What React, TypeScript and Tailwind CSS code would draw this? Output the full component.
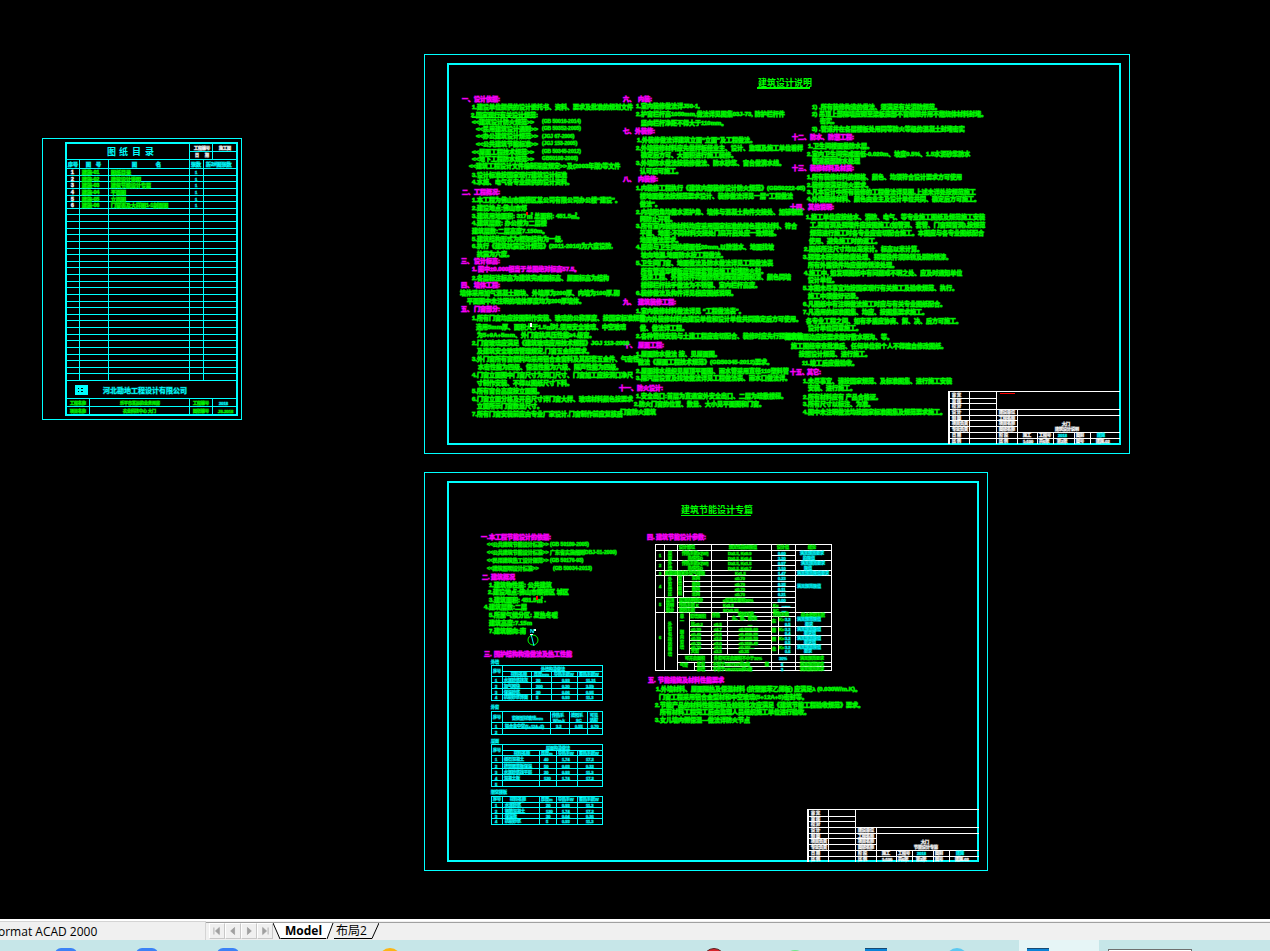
import { useState } from "react";

type Note = [x: number, y: number, text: string];
type Heading = [x: number, y: number, no: string, titleX: number, title: string];
type Seg = [x1: number, y1: number, x2: number, y2: number];

const CYAN = "#00ffff";
const GREEN = "#00ff00";
const MAGENTA = "#ff00ff";
const WHITE = "#ffffff";

// y is the top of the text row in every list below
const designHeadings: Heading[] = [
  [462, 95, "一、", 474, "设计依据:"],
  [462, 188, "二、", 474, "工程概况:"],
  [461, 257, "三、", 474, "设计标高:"],
  [461, 281, "四、", 474, "墙体工程:"],
  [461, 305, "五、", 474, "门窗部分:"],
  [623, 95, "六、", 638, "内装:"],
  [623, 127, "七、", 635, "外装修:"],
  [623, 175, "八、", 638, "内装修:"],
  [623, 298, "九、", 638, "建筑装修工程:"],
  [624, 341, "十、", 638, "屋面工程:"],
  [619, 384, "十一、", 637, "防火设计:"],
  [792, 133, "十二、", 810, "防水、防潮工程:"],
  [792, 164, "十三、", 810, "装修材料及材质:"],
  [790, 203, "十四、", 808, "其他说明:"],
  [790, 368, "十五、", 807, "其它:"],
  [472, 265, "1.", 478, "图中±0.000相当于总图绝对标高57.5。"],
];

const designNotes: Note[] = [
  [472, 103, "1.建设单位提供的设计委托书、资料、要求及批准的规划文件"],
  [471, 111, "2.国家现行有关设计规范:"],
  [472, 118, "<<建筑设计防火规范>>"],
  [476, 125, "<<民用建筑设计通则>>"],
  [476, 132, "<<办公建筑设计规范>>"],
  [476, 140, "<<公共建筑节能标准>>"],
  [472, 148, "<<屋面工程技术规范>>"],
  [472, 155, "<<地下工程防水规范>>"],
  [469, 162, "<<建筑工程设计文件编制深度规定>>及(2003年版)等文件"],
  [472, 171, "3.设计标准按国家现行建筑设计标准"],
  [472, 178, "4.水施、电气各专业提供的设计资料。"],
  [472, 196, "1.本工程为佛山市顺德区某公司有限公司办公楼“建设”。"],
  [472, 204, "2.建设地点:佛山市郊"],
  [472, 212, "3.建筑用地面积: 317㎡ 总面积: 451.5㎡。"],
  [472, 219, "4.建筑层数: 办公楼为二层楼"],
  [472, 227, "建筑层数:二层高度7.150m。"],
  [472, 235, "5.建筑结构形式为框架结构为一级,"],
  [472, 242, "6.执行《建筑抗震设计规范》(2011-2010)为六度设防,"],
  [477, 250, "抗震为六度。"],
  [472, 274, "2.各层标注标高为建筑完成面标高、屋面标高为结构"],
  [460, 289, "墙体采用加气混凝土砌块、外墙厚为200厚、内墙为100厚,砌"],
  [467, 297, "平面图中未注明的墙体厚度均为200厚墙体。"],
  [472, 314, "1.所有门窗均应按图制作安装、玻璃的公称厚度、按国家标准规范"],
  [476, 323, "选用5mm厚、面积大于1.5㎡时,须用安全玻璃、中空玻璃"],
  [477, 331, "为5+9A+5mm、外门窗抗风压性能≥4.级窗。"],
  [472, 339, "2.门窗玻璃应满足《建筑玻璃应用技术规程》JGJ 113-2009"],
  [477, 347, "及建筑安全玻璃管理规定,门窗五金按要求。"],
  [472, 355, "3.外门窗所有窗框料均采用铝合金窗料及其配套五金件、气密性"],
  [478, 363, "水密性能为四级、保温性能为六级、隔声性能为四级。"],
  [472, 371, "4.门窗立面图中门窗尺寸为洞口尺寸、门窗加工应按洞口净尺"],
  [477, 379, "寸制作安装、不得以图纸尺寸下料。"],
  [472, 387, "5.所有窗台高度按立面图。"],
  [472, 395, "6.门窗立面分格及开启尺寸详门窗大样、玻璃材料颜色按要求"],
  [477, 402, "立面所示门窗数量尺寸。"],
  [472, 410, "7.所有门窗安装前应由专业厂家设计,门窗制作前应复核后"],
  [636, 102, "1.室内装修做法详J50-1,"],
  [636, 110, "2.护窗栏杆高1050mm,做法详见图集03J-73, 防护栏杆件"],
  [641, 119, "竖向栏杆净距不得大于110mm。"],
  [637, 136, "1.外装修做法详建筑立面“立面”及工程做法。"],
  [636, 144, "2.外墙装修材料应先做样板经业主、设计、监理及施工单位看样"],
  [641, 151, "确定后方可、大面积进行施工装修。"],
  [636, 159, "3.外墙防水做法按装修做法、防水砂浆、窗台做滴水线。"],
  [640, 167, "认可后可施工。"],
  [636, 184, "1.内装修工程执行《建筑内部装修设计防火规范》(GB50222-95)"],
  [640, 192, "楼地面做法按规范要求设计、装修做法详见一层“工程做法"],
  [640, 200, "做法”。"],
  [636, 208, "2.内墙阳角均做水泥护角、墙体与混凝土构件交接处、加铺钢丝"],
  [640, 215, "网防止开裂。"],
  [636, 222, "3.所有室内装修材料均应采用国家标准的绿色建筑材料、符合"],
  [640, 229, "平面、地面:不同材料交接处门扇开启处应一致规格。"],
  [640, 236, "地面做法要求。"],
  [636, 243, "4.厨房与卫生间的楼面低20mm,以防溢水、地面找坡"],
  [641, 251, "坡向地漏,地面防水按工程做法。"],
  [636, 259, "5.卫生间门窗、地面做法及防水做法详见工程做法表"],
  [641, 267, "所有管道穿楼板应预埋套管后施工封堵防火封。"],
  [641, 273, "油漆工程、外露铁件均做防锈漆两道刷调和漆、颜色同墙"],
  [641, 281, "楼梯栏杆扶手做法为不锈钢、室内栏杆高度。"],
  [636, 289, "6.装修做法及构件详见相应图纸说明。"],
  [636, 307, "1.室内装修材料做法详见 “工程做法表”。"],
  [640, 315, "室内外装修材料由建设单位和设计单位共同确定后方可使用。"],
  [640, 324, "做、做法详工程。"],
  [636, 332, "2.各种管线安装与土建工程应密切配合、装修时应先行预埋安装"],
  [636, 350, "1.屋面防水做法 按、见屋面图。"],
  [638, 358, "做法《屋面工程技术规范》(GB50345-2012)要求。"],
  [636, 367, "2.屋面排水组织见屋顶平面图、雨水管采用直径110塑料管"],
  [636, 374, "3.隔汽层设置及找坡做法详见工程做法表、雨水口做法详。"],
  [636, 392, "1.安全出口:首层为直通室外安全出口、二层为疏散楼梯。"],
  [634, 400, "2.防火门窗的位置、数量、大小见平面图和门窗。"],
  [620, 408, "门窗防火建筑"],
  [812, 103, "1) .所有装修构造的做法、须满足有关消防规范。"],
  [812, 110, "2) 吊顶上部隔墙应砌至梁板底部不留缝隙并用不燃烧体材料封堵。"],
  [820, 117, "密实。"],
  [812, 125, "3) .管道井在各层楼板处用同等防火等级的混凝土封堵密实"],
  [808, 142, "1.卫生间楼面做防水层。"],
  [807, 150, "2.室内卫生间完成面低-0.020m、坡度0.5%、1.5水泥砂浆防水"],
  [812, 157, "管道根部防水处理"],
  [807, 173, "1.所有装修材料的规格、颜色、均须符合设计要求方可使用"],
  [807, 181, "2.装修须满足防火要求。"],
  [807, 188, "3.凡本设计中所有装修的工程做法详见图,上述未详处按规范施工"],
  [807, 195, "4.外墙装修材料、颜色由业主及设计单位共同、确定后方可施工。"],
  [806, 213, "1.施工单位应按给水、消防、电气、等专业施工图纸及规范施工安装"],
  [810, 221, "工,预留洞及预埋件应按图施工(如管洞、套管、门窗预留洞),按规范"],
  [810, 229, "规范进行施工时各专业应密切配合施工。本图应与各专业图纸配合"],
  [809, 237, "使用、避免施工时的返工。"],
  [804, 245, "2.图纸所注尺寸均以毫米计。标高以米计算。"],
  [803, 253, "3.预埋木砖须做防腐处理、预埋铁件须除锈及刷防锈漆。"],
  [808, 261, "所有外露铁件均应做防锈漆处理。"],
  [804, 269, "4.施工中, 如发现图纸中有问题或不明之处、应及时通知单位"],
  [808, 276, "设计单位。"],
  [803, 284, "5.本图未尽事宜均按国家现行有关施工及验收规范、执行。"],
  [808, 292, "施工中须做好记录。"],
  [803, 300, "6.凡图纸中有注明做法施工时应与有关专业图纸配合。"],
  [803, 308, "7.凡选用的标准图集、均应、按图集要求施工。"],
  [806, 317, "各专业工程之间、如有矛盾应协商、解、决、后方可施工。"],
  [808, 324, "设计单位同意施工。"],
  [785, 333, "建筑物周边应按要求做好散水明沟、等。"],
  [791, 342, "施工图经审查批准后、任何单位和个人不得擅自修改图纸。"],
  [799, 350, "按照设计规范、进行施工。"],
  [802, 359, "11.竣工后应做验收。"],
  [803, 377, "1.未尽事宜、请按国家规范、及标准图集、进行施工安装"],
  [808, 384, "安装、进行施工。"],
  [803, 393, "2.所有材料应有 产品合格证。"],
  [803, 400, "3.所有尺寸以标注、为准。"],
  [803, 408, "4.图中未注明做法均按国家标准图集及规范要求施工。"],
];

const designCodes: Note[] = [
  [542, 118, "(GB 50016-2014)"],
  [542, 125, "(GB 50352-2005)"],
  [542, 133, "(JGJ 67-2006)"],
  [542, 140, "(JGJ 153-2005)"],
  [542, 148, "(GB 50345-2012)"],
  [542, 155, "GB50108-2008)"],
];

const energyHeadings: Heading[] = [
  [481, 533, "一.", 489, "本工程节能设计的依据:"],
  [482, 573, "二.", 491, "建筑概况"],
  [484, 650, "三.", 494, "围护结构构造做法及热工性能"],
  [647, 533, "四.", 656, "建筑节能设计参数:"],
  [648, 676, "五.", 658, "节能措施及材料性能要求"],
];

const energyNotes: Note[] = [
  [489, 581, "1.建筑物性质: 公共建筑"],
  [488, 588, "2.建设地点:佛山市顺德区 城区"],
  [489, 596, "3.建筑面积: 451.5㎡ ."],
  [484, 603, "4.建筑层数:二层"],
  [489, 611, "5.所属气候分区: 夏热冬暖"],
  [489, 619, "建筑高度:7.15m"],
  [489, 627, "7.建筑朝向:南"],
  [656, 685, "1.外墙材料、屋面隔热及保温材料 (挤塑聚苯乙烯板) 应满足λ (0.030W/m.K)。"],
  [659, 693, "门窗工程采用铝合金型材和中空玻璃(5+12A+5)密封等。"],
  [655, 701, "2.节能产品的材料性能指标及检验批次应满足《建筑节能工程验收规范》要求。"],
  [660, 708, "所有材料工程完工后由监理人员组织施工单位进行验收。"],
  [655, 716, "3.女儿墙内侧保温—做法详防火节点"],
];

const energyCodes: Note[] = [
  [487, 541, "<<公共建筑节能设计标准>> (GB 50189-2005)"],
  [487, 549, "<<公共建筑节能设计标准>> 广东省实施细则DBJ-51-2009)"],
  [487, 557, "<<民用建筑热工设计规范>> (GB 50176-93)"],
  [487, 565, "<<建筑照明设计标准>>"],
  [553, 565, "(GB 50034-2013)"],
];

const catalogRows = [
  ["建施-01", "图纸目录"],
  ["建施-02", "建筑设计说明"],
  ["建施-03", "建筑节能设计专篇"],
  ["建施-04", "平面图"],
  ["建施-05", "立面图"],
  ["建施-06", "门窗表及大样图1-1剖面图"],
];

// 32 rows share the 212px between the header and the company name
const catalogRowY = (i: number) => Math.round(168 + i * 6.625);

const catalogLines: Seg[] = [
  [66, 159, 237, 159],
  [189, 151, 237, 151],
  [66, 398, 237, 398],
  [66, 406, 237, 406],
  [79, 159, 79, 380],
  [108, 159, 108, 380],
  [189, 143, 189, 380],
  [203, 159, 203, 380],
  [212, 143, 212, 159],
  [89, 398, 89, 415],
  [189, 398, 189, 415],
  [212, 398, 212, 415],
];

const titleBlockLines: Seg[] = [
  [0, 0, 172, 0],
  [0, 0, 0, 53],
  [1, 0, 1, 53],
  [21, 0, 21, 53],
  [48, 0, 48, 53],
  [69, 18, 69, 53],
  [89, 41, 89, 53],
  [105, 41, 105, 53],
  [126, 41, 126, 53],
  [142, 41, 142, 53],
  [0, 7, 48, 7],
  [0, 12, 48, 12],
  [0, 18, 172, 18],
  [0, 24, 172, 24],
  [0, 29, 69, 29],
  [0, 35, 69, 35],
  [0, 41, 172, 41],
  [0, 47, 172, 47],
];

const summaryLines: Seg[] = [
  [664, 544, 664, 670], [677, 544, 677, 670], [711, 544, 711, 670],
  [771, 544, 771, 670], [795, 544, 795, 670], [683, 575, 683, 597],
  [689, 612, 689, 654], [727, 612, 727, 654], [694, 662, 694, 670],
  [778, 616, 778, 654], [655, 550, 831, 550], [655, 560, 831, 560],
  [771, 555, 795, 555], [771, 565, 795, 565], [655, 570, 831, 570],
  [655, 575, 831, 575], [683, 581, 795, 581], [683, 586, 795, 586],
  [683, 591, 795, 591], [655, 597, 795, 597], [677, 602, 795, 602],
  [677, 607, 795, 607], [655, 612, 831, 612], [727, 616, 795, 616],
  [689, 620, 771, 620], [689, 626, 831, 626], [689, 631, 771, 631],
  [689, 635, 831, 635], [689, 640, 771, 640], [689, 644, 831, 644],
  [689, 648, 771, 648], [677, 654, 831, 654], [677, 662, 831, 662],
  [694, 666, 831, 666],
];

const summaryGreen: Note[] = [
  [679, 545, "设计部位"], [729, 545, "规定性指标限值"], [777, 545, "设计值"], [808, 545, "结论"],
  [659, 553, "1"], [659, 563, "2"], [659, 571, "3"], [659, 584, "4"], [659, 602, "5"], [659, 635, "6"],
  [668, 551, "屋"], [668, 556, "面"], [668, 561, "外"], [668, 566, "墙"],
  [682, 551, "传热系数K[W/]"], [688, 556, "热惰性D"],
  [682, 561, "传热系数K[W/]"], [688, 566, "热惰性D"],
  [728, 551, "D≥2.5, K≤0.9"], [728, 556, "D≥2.5, K≤0.4"],
  [728, 561, "D≥2.5, K≤1.5"], [728, 566, "D≥2.5, K≤0.7"],
  [665, 571, "底面接触室外空气楼板"], [735, 571, "K≤1.5"],
  [668, 577, "外"], [668, 582, "窗"], [668, 587, "墙"], [668, 592, "比"],
  [678, 576, "窗"], [678, 581, "墙"], [678, 586, "面"], [678, 591, "积"],
  [692, 576, "东向"], [692, 582, "南向"], [692, 587, "西向"], [692, 592, "北向"],
  [735, 576, "≤0.70"], [735, 582, "≤0.70"], [735, 587, "≤0.70"], [735, 592, "≤0.70"],
  [666, 598, "屋顶"], [666, 603, "透明"], [666, 608, "部分"],
  [679, 598, "屋顶透明部分"], [723, 598, "≤屋顶总面积20%"],
  [679, 603, "传热系数 K"], [723, 603, "K≤3.5"], [679, 608, "遮阳系数"], [723, 608, "SC≤0.35"],
  [773, 603, "K="], [773, 608, "SC"],
  [668, 622, "外"], [668, 627, "窗"], [668, 632, "包"], [668, 637, "括"], [668, 642, "透"], [668, 647, "明"], [668, 652, "墙"],
  [680, 614, "单"], [680, 619, "一"], [680, 630, "朝"], [680, 635, "向"], [680, 640, "窗"], [680, 645, "墙"],
  [690, 614, "窗墙面积"], [712, 613, "传热"], [738, 612, "遮阳系数"],
  [732, 616, "东、南、西/北"], [773, 612, "传热系数"], [801, 613, "综合遮阳系数"],
  [691, 622, "比≤0.2"], [691, 627, "≤0.30"], [691, 632, "≤0.40"], [691, 636, "≤0.50"], [691, 641, "≤0.70"], [691, 645, "≤0.70"], [691, 649, "天窗"],
  [714, 622, "≤6.5"], [714, 627, "≤4.7"], [714, 632, "≤3.5"], [714, 636, "≤3.0"], [714, 641, "≤3.0"], [714, 645, "≤2.5"], [714, 649, "≤3.5"],
  [748, 622, "—"], [739, 627, "≤0.50/0.60"], [739, 632, "≤0.45/0.55"], [739, 636, "≤0.40/0.50"], [739, 641, "≤0.35/0.45"], [739, 645, "≤0.35/—"], [739, 649, "≤0.35"],
  [772, 619, "东"], [772, 628, "南"], [772, 637, "西"], [772, 647, "北"],
  [779, 617, "K="], [779, 627, "K="], [779, 636, "K="], [779, 645, "K="],
  [685, 656, "可开启面积"], [714, 656, "外窗可开启面积不小于30%"], [800, 656, "满足规范要求"],
  [680, 663, "气密"], [697, 662, "外窗"], [697, 667, "幕墙"],
  [713, 662, "不低于GB7107的6级"], [713, 667, "不低于GB15225的3级"], [765, 662, "级"],
  [800, 662, "满足规范要求"], [800, 667, "满足规范要求"],
];

const summaryCyan: Note[] = [
  [778, 551, "0.60"], [778, 556, "3.20"], [778, 561, "0.97"], [778, 566, "3.10"], [778, 571, "1.47"],
  [778, 576, "0.23"], [778, 582, "0.35"], [778, 587, "0.11"], [778, 592, "0.21"], [778, 598, "0.00"],
  [800, 551, "满足规范要求"], [803, 556, "的限值"], [801, 561, "满足规范要求"], [804, 566, "限值"],
  [797, 571, "满足规范限值要求"], [797, 584, "满足规范限值"],
  [782, 603, "——"], [782, 608, "—"],
  [785, 617, "3.2"], [785, 627, "3.2"], [785, 636, "3.2"], [785, 645, "3.2"],
  [785, 622, "0.5"], [785, 631, "0.4"], [785, 640, "0.5"], [785, 649, "0.6"],
  [797, 617, "满足规范限值"], [805, 622, "要求"], [797, 627, "满足规范限值"], [804, 631, "要求值"],
  [797, 636, "满足规范限值"], [804, 640, "要求值"], [797, 645, "满足规范限值"], [804, 649, "要求"],
  [779, 656, "30%"], [781, 662, "6"], [781, 667, "3"],
];

const layerLines: Seg[] = [
  [502, 665, 502, 700], [531, 671, 531, 700], [551, 671, 551, 700], [577, 671, 577, 700],
  [502, 671, 602, 671], [491, 676, 602, 676], [491, 682, 602, 682], [491, 688, 602, 688], [491, 694, 602, 694],
  [502, 711, 502, 734], [550, 711, 550, 734], [569, 711, 569, 734], [587, 711, 587, 734],
  [491, 722, 602, 722], [491, 728, 602, 728],
  [502, 744, 502, 786], [539, 750, 539, 786], [556, 750, 556, 786], [577, 750, 577, 786],
  [502, 750, 602, 750], [491, 755, 602, 755], [491, 762, 602, 762], [491, 768, 602, 768], [491, 774, 602, 774], [491, 780, 602, 780],
  [502, 796, 502, 824], [539, 796, 539, 824], [556, 796, 556, 824], [577, 796, 577, 824],
  [491, 802, 602, 802], [491, 807, 602, 807], [491, 813, 602, 813], [491, 818, 602, 818],
];

const layerNotes: Note[] = [
  [491, 660, "外墙"], [493, 669, "序号"], [541, 667, "外墙构造做法"],
  [511, 672, "材料名称"], [534, 672, "厚度mm"], [554, 672, "导热系数W"], [579, 672, "蓄热系数W"],
  [495, 678, "1"], [504, 678, "水泥砂浆抹灰"], [536, 678, "20"], [562, 678, "0.93"], [586, 678, "11.31"],
  [495, 684, "2"], [504, 684, "加气砌块"], [536, 684, "200"], [562, 684, "0.20"], [586, 684, "3.59"],
  [495, 690, "3"], [504, 690, "保温砂浆"], [536, 690, "30"], [562, 690, "0.06"], [586, 690, "0.95"],
  [495, 695, "4"], [504, 695, "抗裂砂浆饰面"], [536, 695, "5"], [562, 695, "0.93"], [586, 695, "11.3"],
  [491, 705, "外窗"], [493, 715, "序号"], [512, 716, "窗框型材玻璃mm"],
  [552, 713, "传热系"], [553, 718, "W/m.k"], [571, 713, "遮阳系"], [576, 718, "SC"], [590, 713, "可见"], [590, 718, "透射"],
  [495, 724, "1"], [505, 724, "铝合金中空(5+12A+5)"], [556, 724, "3.2"], [575, 724, "0.55"], [591, 724, "0.70"], [495, 730, "2"],
  [491, 739, "屋面"], [493, 748, "序号"], [546, 746, "屋面构造做法"],
  [514, 751, "材料名称"], [541, 751, "厚度m"], [558, 751, "导热系W"], [579, 751, "蓄热系数W"],
  [495, 757, "1"], [504, 757, "细石混凝土"], [544, 757, "40"], [562, 757, "1.74"], [586, 757, "17.2"],
  [495, 764, "2"], [504, 764, "挤塑聚苯板保温"], [544, 764, "50"], [562, 764, "0.03"], [586, 764, "0.32"],
  [495, 770, "3"], [504, 770, "水泥砂浆找平层"], [544, 770, "20"], [562, 770, "0.93"], [586, 770, "11.3"],
  [495, 776, "4"], [504, 776, "混凝土板"], [544, 776, "120"], [562, 776, "1.74"], [586, 776, "17.2"], [495, 782, "5"],
  [491, 790, "架空楼板"], [493, 797, "序号"], [510, 797, "材料名称"], [541, 797, "厚度m"], [558, 797, "导热系W"], [579, 797, "蓄热系数W"],
  [495, 803, "1"], [505, 803, "水泥砂浆"], [546, 803, "20"], [562, 803, "0.93"], [586, 803, "11.3"],
  [495, 809, "2"], [505, 809, "钢筋混凝土"], [546, 809, "120"], [562, 809, "1.74"], [586, 809, "17.2"],
  [495, 814, "3"], [505, 814, "保温板"], [546, 814, "30"], [562, 814, "0.04"], [586, 814, "0.36"],
  [495, 819, "4"], [505, 819, "抗裂砂浆"], [546, 819, "5"], [562, 819, "0.93"], [586, 819, "11.3"],
];

const noteSizes = {
  tiny: { cls: "text-[4px]", rise: 4, weight: 0.5 },
  small: { cls: "text-[5px]", rise: 5, weight: 0.6 },
  body: { cls: "text-[6px]", rise: 6, weight: 0.7 },
};

function Lines({ segs, color }: { segs: Seg[]; color: string }) {
  return (
    <g stroke={color} shapeRendering="crispEdges">
      {segs.map(([x1, y1, x2, y2], i) =>
        x1 === x2 ? (
          <path key={i} d={`M${x1 + 0.5} ${y1}V${y2}`} />
        ) : (
          <path key={i} d={`M${x1} ${y1 + 0.5}H${x2}`} />
        )
      )}
    </g>
  );
}

function Notes({ notes, color, size = "body" }: { notes: Note[]; color: string; size?: keyof typeof noteSizes }) {
  const { cls, rise, weight } = noteSizes[size];
  return (
    <g fill={color} stroke={color} strokeOpacity={weight} className={cls}>
      {notes.map(([x, y, text], i) => (
        <text key={i} x={x} y={y + rise}>
          {text}
        </text>
      ))}
    </g>
  );
}

function Headings({ items }: { items: Heading[] }) {
  return (
    <Notes
      color={MAGENTA}
      notes={items.flatMap(([x, y, no, titleX, title]) => [[x, y, no], [titleX, y, title]] as Note[])}
    />
  );
}

function Frame({ x, y, w, h, left }: { x: number; y: number; w: number; h: number; left: number }) {
  return (
    <g fill="none" stroke={CYAN} shapeRendering="crispEdges">
      <rect x={x + 0.5} y={y + 0.5} width={w} height={h} />
      <rect x={x + left} y={y + 10} width={w - left - 9} height={h - 19} strokeWidth="2" />
    </g>
  );
}

function TitleBlock({ x, y, title, sheet }: { x: number; y: number; title: string; sheet: string }) {
  const rows = [2, 8, 13, 19, 25, 30, 36, 42, 48];
  const roles = ["审  定", "审  核", "校  对", "设  计", "制  图", "项目负责", "专业负责", "日  期", "比  例"];
  return (
    <g transform={`translate(${x} ${y})`}>
      <Lines segs={titleBlockLines} color={WHITE} />
      <Notes size="tiny" color={WHITE} notes={rows.map((r, i) => [4, r, roles[i]] as Note)} />
      <Notes
        size="tiny"
        color={WHITE}
        notes={[
          [51, 19, "建设单位"], [51, 25, "工程名称"], [51, 30, "项目名称"], [51, 36, "图纸名称"], [51, 42, "阶 段"], [51, 48, "比 例"],
          [114, 31, "大门"], [107, 36, title],
          [75, 42, "施工"], [91, 42, "工程号"], [128, 42, "图别"],
          [75, 48, "1:100"], [91, 48, "共6张"], [109, 48, "第2张"], [128, 48, "图号"], [148, 48, "建施-02"],
        ]}
      />
      <Notes size="tiny" color={CYAN} notes={[[110, 42, "2018"], [149, 42, sheet]]} />
    </g>
  );
}

function Catalog() {
  return (
    <g>
      <g fill="none" stroke={CYAN} shapeRendering="crispEdges">
        <rect x="42.5" y="138.5" width="199" height="281" />
        <rect x="66" y="143" width="171" height="272" strokeWidth="2" />
      </g>
      <Lines segs={catalogLines} color={CYAN} />
      <Lines
        segs={Array.from({ length: 33 }, (_, i) => [66, catalogRowY(i), 237, catalogRowY(i)] as Seg)}
        color={CYAN}
      />
      <g fill={CYAN} className="text-[9px]">
        <text x="107" y="155">图</text>
        <text x="119" y="155">纸</text>
        <text x="132" y="155">目</text>
        <text x="145" y="155">录</text>
      </g>
      <Notes size="tiny" color={WHITE} notes={[[194, 146, "工程编号"], [219, 146, "施工图"], [195, 153, "日"], [205, 153, "期"]]} />
      <Notes
        size="small"
        color={CYAN}
        notes={[[68, 161, "序号"], [86, 161, "图"], [96, 161, "号"], [132, 161, "图"], [156, 161, "名"], [191, 161, "张数"], [206, 161, "折2#图张数"]]}
      />
      {catalogRows.map(([code, name], i) => (
        <g key={code}>
          <Notes size="small" color={WHITE} notes={[[71, catalogRowY(i) + 1, String(i + 1)]]} />
          <Notes size="small" color={GREEN} notes={[[82, catalogRowY(i) + 1, code], [111, catalogRowY(i) + 1, name]]} />
          <Notes size="tiny" color={CYAN} notes={[[195, catalogRowY(i) + 2, "1"]]} />
        </g>
      ))}
      <g shapeRendering="crispEdges">
        <rect x="75" y="385" width="13" height="10" fill={CYAN} />
        <path d="M78 388h1v1h-1zM81 388h2v1h-2zM78 391h1v1h-1zM81 391h2v1h-2z" />
      </g>
      <text x="103" y="393" fill={CYAN} stroke={CYAN} strokeOpacity="0.4" className="text-[7px]">
        河北勘地工程设计有限公司
      </text>
      <Notes
        size="tiny"
        color={GREEN}
        notes={[[70, 401, "工程名称"], [120, 401, "乐平市某局的业务用房"], [193, 401, "工程编号"], [70, 409, "项目名称"], [123, 409, "农业科技中心  大门"], [193, 409, "图纸编号"], [218, 409, "JS-2018"]]}
      />
      <Notes size="tiny" color={CYAN} notes={[[219, 401, "2018"]]} />
    </g>
  );
}

function DesignSheet() {
  return (
    <g>
      <Frame x={424} y={54} w={705} h={399} left={24} />
      <text x="758" y="86" fill={GREEN} className="text-[9px]">建筑设计说明</text>
      <path d="M757 88H810" stroke={GREEN} strokeWidth="2" />
      <path d="M472 117.500H535" stroke={GREEN} />
      <Headings items={designHeadings} />
      <Notes notes={designNotes} color={GREEN} />
      <Notes size="small" notes={designCodes} color={GREEN} />
      <g shapeRendering="crispEdges">
        <rect x="526" y="212" width="2" height="3" fill="#ff0000" />
        <rect x="530" y="323" width="2" height="4" fill={WHITE} />
      </g>
      <TitleBlock x={948} y={391} title="建筑设计说明" sheet="建施" />
      <path d="M1000 393.500H1015" stroke="#ff0000" />
    </g>
  );
}

function EnergySheet() {
  return (
    <g>
      <Frame x={424} y={472} w={563} h={398} left={24} />
      <text x="681" y="513" fill={GREEN} className="text-[9px]">建筑节能设计专篇</text>
      <path d="M681 515.500H751" stroke={GREEN} />
      <Headings items={energyHeadings} />
      <Notes notes={energyNotes} color={GREEN} />
      <Notes size="small" notes={energyCodes} color={GREEN} />
      <rect x="536" y="596" width="2" height="4" fill="#ff0000" />
      {/* north arrow */}
      <circle cx="533" cy="640" r="5" fill="none" stroke={GREEN} />
      <path d="M531 634L534 646" stroke={CYAN} />
      <path d="M530 634h3v1h-3zM534 629h2v2h-2z" fill={WHITE} />
      <text x="530" y="633" fill={CYAN} className="text-[6px]">N</text>

      <g fill="none" stroke={CYAN} shapeRendering="crispEdges">
        <rect x="491.5" y="665.5" width="111" height="35" />
        <rect x="491.5" y="711.5" width="111" height="23" />
        <rect x="491.5" y="744.5" width="111" height="42" />
        <rect x="491.5" y="796.5" width="111" height="28" />
        <rect x="655.5" y="544.5" width="176" height="126" stroke={WHITE} />
      </g>
      <Lines segs={layerLines} color={CYAN} />
      <Notes size="tiny" notes={layerNotes} color={CYAN} />
      <Lines segs={summaryLines} color={WHITE} />
      <Notes size="tiny" notes={summaryGreen} color={GREEN} />
      <Notes size="tiny" notes={summaryCyan} color={CYAN} />
      <TitleBlock x={807} y={809} title="节能设计专篇" sheet="建施" />
    </g>
  );
}

function LayoutTabs() {
  const [active, setActive] = useState("Model");
  const arrows = [
    { label: "First layout", d: "M4 3v9M11 3v9l-5-4.500z" },
    { label: "Previous layout", d: "M10 3v9l-5-4.500z" },
    { label: "Next layout", d: "M6 3v9l5-4.500z" },
    { label: "Last layout", d: "M12 3v9M5 3v9l5-4.500z" },
  ];
  return (
    <div className="flex h-[21px] shrink-0 border-t-2 border-white bg-[#f0f0f0] text-black">
      <div className="w-[206px] shrink-0 overflow-hidden border-t border-r border-[#d4d4d4] pt-px -indent-0.5 font-['Open_Sans','Noto_Sans',sans-serif] text-[12px] leading-[18px] whitespace-nowrap">
        ormat ACAD 2000
      </div>
      <div className="mt-px flex flex-1 border-t border-[#a0a0a0] pl-[3px]">
        {arrows.map(({ label, d }) => (
          <button
            key={label}
            aria-label={label}
            className="h-4 w-4 shrink-0 border border-[#c8c8c8] border-t-white border-l-white bg-[#f0f0f0]"
          >
            <svg viewBox="-1 -1 18 17" className="size-full" fill="#a0a0a0" stroke="#a0a0a0">
              <path d={d} />
            </svg>
          </button>
        ))}
        <svg className="h-4 w-2 shrink-0" viewBox="0 0 8 16" fill="#fff">
          <path d="M0 0H8V16H7z" />
          <path d="M0 0L7 16H8" stroke="#000" fill="none" />
        </svg>
        <button
          onClick={() => setActive("Model")}
          className={`h-4 border-b bg-white px-1 font-['Open_Sans','Noto_Sans',sans-serif] text-[12px] leading-[14px] ${
            active === "Model" ? "border-black font-bold" : "border-[#a0a0a0]"
          }`}
        >
          Model
        </button>
        <svg className="h-4 w-2 shrink-0" viewBox="0 0 8 16">
          <path d="M0 0H7L1 16H0z" fill="#fff" />
          <path d="M7 0L1 16" stroke="#000" />
        </svg>
        <button
          onClick={() => setActive("布局2")}
          className={`h-4 border-b border-black pl-0.5 font-['Open_Sans','Noto_Sans_CJK_SC',sans-serif] text-[12px] leading-[15px] ${
            active === "布局2" ? "bg-white font-bold" : ""
          }`}
        >
          布局2
        </button>
        <svg className="h-4 w-3 shrink-0" viewBox="0 0 12 16" stroke="#000" fill="none">
          <path d="M12 0L5 15.500H0" />
        </svg>
      </div>
    </div>
  );
}

const apps = [
  { name: "Browser", color: "bg-[#3b82f6] rounded-md" },
  { name: "Chat", color: "bg-[#3b82f6] rounded-md" },
  { name: "Mail", color: "bg-[#3b82f6] rounded-md" },
  { name: "Search", color: "" },
  { name: "Folder", color: "bg-[#fbb515] rounded-full" },
  { name: "Notes", color: "" },
  { name: "Music", color: "" },
  { name: "Photos", color: "" },
  { name: "Player", color: "bg-[#d8232a] border border-[#5a2020] rounded-full" },
  { name: "Messages", color: "bg-[#6ee787] rounded-full mt-0.5" },
  { name: "CAD", color: "bg-[#0a84d8] border-t border-[#174a73]" },
  { name: "Cloud", color: "bg-[#5bc8f0] rounded-full" },
  { name: "CAD viewer", color: "bg-[#0a84d8] border-t border-[#174a73]", active: true },
];

function Taskbar() {
  return (
    <div className="flex h-[11px] shrink-0 gap-px overflow-hidden bg-[#c6e6e8] pl-[47px]">
      {apps.map(({ name, color, active }) => (
        <button
          key={name}
          aria-label={name}
          className={`flex h-10 w-20 shrink-0 items-start pt-2 pl-2 ${active ? "bg-[#e6f5f6]" : ""}`}
        >
          <span className={`size-[22px] ${color}`} />
        </button>
      ))}
      <input aria-label="Search" className="mt-[9px] ml-2 h-6 w-[84px] shrink-0 border border-[#707070] bg-white" />
    </div>
  );
}

export default function App() {
  return (
    <div className="flex h-screen flex-col overflow-hidden bg-black">
      <svg
        className="min-h-0 w-full flex-1 font-['Liberation_Sans','Noto_Sans_CJK_SC',sans-serif] font-bold"
        role="img"
        aria-label="Model space"
      >
        <Catalog />
        <DesignSheet />
        <EnergySheet />
      </svg>
      <LayoutTabs />
      <Taskbar />
    </div>
  );
}
